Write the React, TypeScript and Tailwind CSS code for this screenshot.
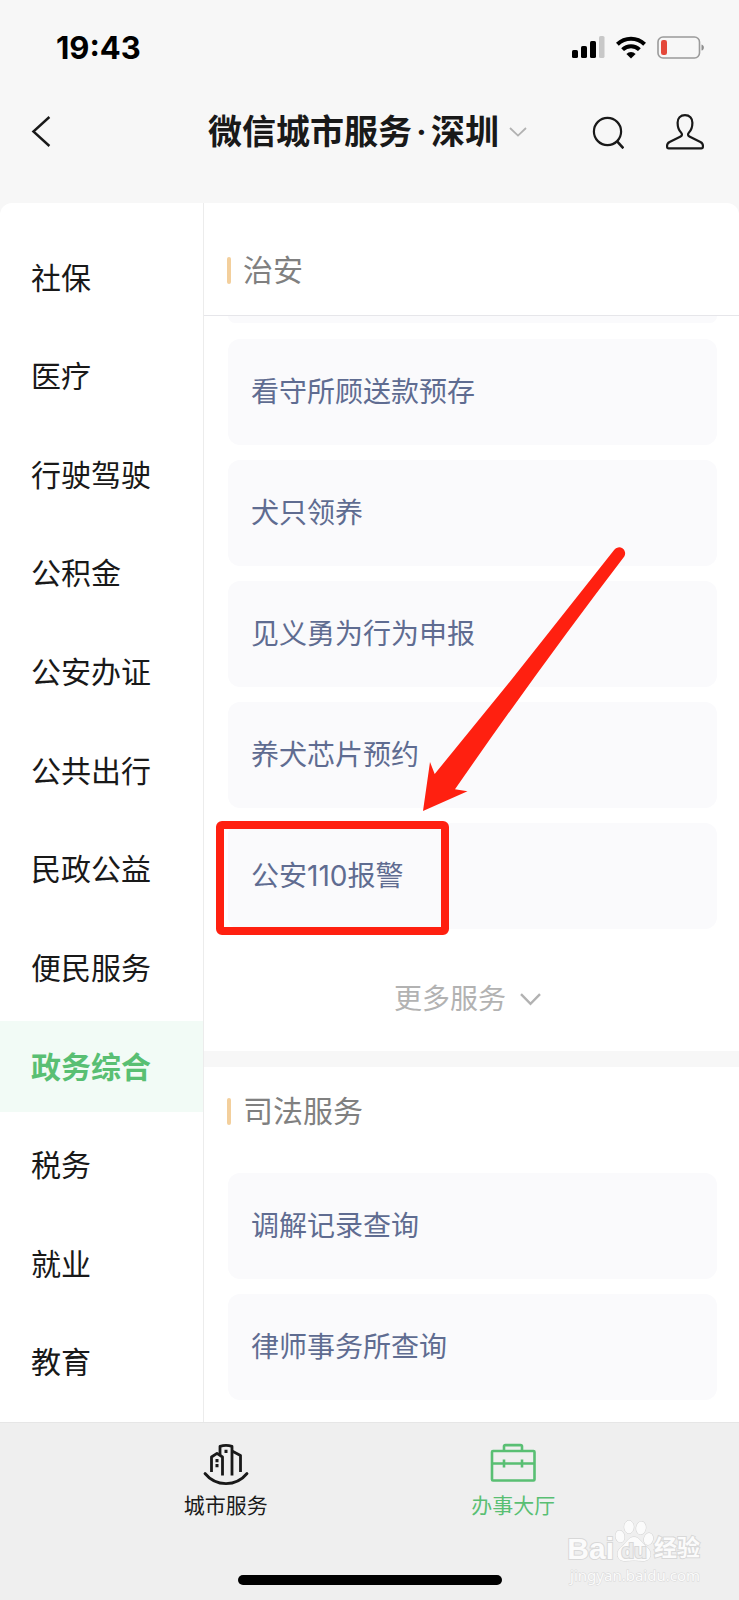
import { useState } from "react";

const CATEGORIES = [
  "社保",
  "医疗",
  "行驶驾驶",
  "公积金",
  "公安办证",
  "公共出行",
  "民政公益",
  "便民服务",
  "政务综合",
  "税务",
  "就业",
  "教育",
] as const;

const SECURITY_SERVICES = ["看守所顾送款预存", "犬只领养", "见义勇为行为申报", "养犬芯片预约", "公安110报警"];
const JUSTICE_SERVICES = ["调解记录查询", "律师事务所查询"];
const HIGHLIGHTED = "公安110报警";

function StatusBar() {
  return (
    <div className="flex h-[94px] items-center justify-between pl-14 pr-[34px] text-black">
      <span className="text-[31px] font-bold leading-none">19:43</span>
      <div className="flex items-center gap-[11px]">
        <svg width="33" height="22" viewBox="0 0 33 22" fill="currentColor">
          <rect x="0" y="14" width="6" height="8" rx="1.6" />
          <rect x="9" y="10" width="6" height="12" rx="1.6" />
          <rect x="18" y="5" width="6" height="17" rx="1.6" />
          <rect x="27" y="0" width="5.5" height="22" rx="1.6" fill="#c8c8c8" />
        </svg>
        <svg width="30" height="23" viewBox="0 0 30 23" fill="none" stroke="currentColor" strokeWidth="4">
          <path d="M1.4 8.2a19.5 19.5 0 0 1 27.2 0" />
          <path d="M6.6 13.6a12 12 0 0 1 16.8 0" />
          <path d="M15 22.6l-4.6-4.7a6.6 6.6 0 0 1 9.2 0z" fill="currentColor" stroke="none" />
        </svg>
        <svg width="48" height="23" viewBox="0 0 48 23" fill="none">
          <rect x="1" y="1" width="41.5" height="21" rx="5" stroke="#9b9b9b" strokeWidth="1.6" />
          <rect x="4" y="4" width="6" height="15" rx="2.2" fill="#e4483a" />
          <path d="M44.5 8.4c3.2.8 3.2 5.4 0 6.2z" fill="#8e8e8e" />
        </svg>
      </div>
    </div>
  );
}

function TitleBar() {
  return (
    <div className="mb-[33px] grid h-[76px] grid-cols-[1fr_auto_1fr] items-center pl-[31px] pr-[35px] text-[#191919]">
      <button type="button" aria-label="返回" className="justify-self-start">
        <svg width="20" height="32" viewBox="0 0 20 32" fill="none" stroke="currentColor" strokeWidth="2.4">
          <path d="M18.4 1L2.4 15.5l16 14.5" />
        </svg>
      </button>
      <button type="button" className="flex items-center gap-[10px]">
        <h1 className="text-[34px] font-semibold leading-none">
          微信城市服务<span className="mx-1">·</span>深圳
        </h1>
        <svg width="18" height="10" viewBox="0 0 18 10" fill="none" stroke="#b2b2b2" strokeWidth="1.8">
          <path d="M1 1l8 7.6L17 1" />
        </svg>
      </button>
      <div className="flex items-center gap-[42px] justify-self-end">
        <button type="button" aria-label="搜索">
          <svg width="32" height="34" viewBox="0 0 32 34" fill="none" stroke="currentColor" strokeWidth="2.2">
            <circle cx="15.5" cy="16.500" r="13.600" />
            <path d="M24.900 26.100l6.500 7.200" strokeWidth="2.6" />
          </svg>
        </button>
        <button type="button" aria-label="我的">
          <svg width="38" height="36" viewBox="0 0 38 36" fill="none" stroke="currentColor" strokeWidth="2.2" strokeLinejoin="round">
            <path d="M19 1.2c-4.6 0-7.4 3.2-7.4 7.6 0 4.4 1.4 7.8 3.6 10 1.2 1.2 1 2.8-.6 3.6L3.6 28C1.8 28.9 1.1 29.8 1.1 31.6v1.2c0 1 .5 1.6 1.6 1.6h32.6c1.1 0 1.6-.6 1.6-1.6v-1.2c0-1.8-.7-2.7-2.5-3.6l-11-5.6c-1.6-.8-1.8-2.4-.6-3.6 2.2-2.2 3.6-5.6 3.6-10 0-4.4-2.8-7.6-7.4-7.6z" />
          </svg>
        </button>
      </div>
    </div>
  );
}

function SectionTitle({ children }: { children: string }) {
  return (
    <h2 className="flex items-center gap-3 text-[30px] leading-[44px] text-[#808080]">
      <span className="h-[27px] w-1 rounded-sm bg-[#f3cf9c]" />
      {children}
    </h2>
  );
}

function ServiceCard({ name }: { name: string }) {
  return (
    <li className="relative">
      <button
        type="button"
        className="flex h-[106px] w-full items-center rounded-xl bg-[#fafafc] px-[23px] text-left text-[28px] leading-[40px] text-[#5f6c91]"
      >
        {name}
      </button>
      {name === HIGHLIGHTED && (
        <>
          <span className="pointer-events-none absolute -left-3 -top-0.5 h-[114px] w-[233px] rounded-md border-8 border-[#ff2010]" />
          <svg
            className="pointer-events-none absolute bottom-[118px] left-[194px]"
            width="206"
            height="264"
            viewBox="0 0 206 264"
            fill="#ff2010"
          >
            <path d="M1 264L8 215l4.700 12L90 132 192.300 2.800a6 6 0 0 1 10 6.600Q117 121 33 242.300l12.500 2z" />
          </svg>
        </>
      )}
    </li>
  );
}

function ServiceList({ items }: { items: string[] }) {
  return (
    <ul className="flex flex-col gap-[15px]">
      {items.map((name) => (
        <ServiceCard key={name} name={name} />
      ))}
    </ul>
  );
}

function CityIcon() {
  return (
    <svg width="46" height="44" viewBox="0 0 46 44" fill="none" stroke="currentColor" strokeWidth="2.8">
      <path d="M8.5 29V14l5.5-3.6 5.5 3.6V32.5" strokeLinejoin="round" />
      <path d="M17 12V3.4Q23 1.4 29 3.4V32.5" strokeLinejoin="round" />
      <path d="M29 8l8.5 4.5V29" strokeLinejoin="round" />
      <path d="M2 30.5a27 27 0 0 0 42 0" strokeLinecap="round" />
      <path d="M14 16v3.2M14 21v3.2M23 6.8v3.2" strokeWidth="3" />
    </svg>
  );
}

function BriefcaseIcon() {
  return (
    <svg width="46" height="44" viewBox="0 0 46 44" fill="none" stroke="currentColor" strokeWidth="2.6" strokeLinejoin="round">
      <rect x="2" y="8" width="42.5" height="29.5" rx="1" />
      <path d="M14 8V3.5q0-1.4 1.4-1.4h15.2q1.4 0 1.4 1.4V8" />
      <path d="M2 20.5h42.5M14 16.5v8M32 16.5v8" />
    </svg>
  );
}

function Watermark() {
  return (
    <div className="pointer-events-none absolute bottom-[14px] right-[39px] flex flex-col items-end font-['Liberation_Sans','Noto_Sans_CJK_SC',sans-serif] text-[#fbfbfb] [-webkit-text-stroke:2px_#d8d8d8] [paint-order:stroke_fill]">
      <div className="flex items-end">
        <span className="text-[30px] font-bold leading-[30px]">Bai</span>
        <span className="relative flex h-[46px] w-10 items-end justify-center">
          <svg className="absolute inset-0" width="40" height="46" viewBox="0 0 40 46" fill="#fbfbfb" stroke="#d2d2d2" strokeWidth="1">
            <ellipse cx="6" cy="18.5" rx="4.5" ry="6" transform="rotate(-10 6 18.5)" />
            <ellipse cx="15" cy="9" rx="4.8" ry="6.5" />
            <ellipse cx="27" cy="10" rx="4.8" ry="6.5" transform="rotate(8 27 10)" />
            <ellipse cx="34.5" cy="21" rx="4.5" ry="6" transform="rotate(15 34.5 21)" />
            <path d="M20 19c-4.5 0-6.5 3.5-9 6.500-2.500 3-7.500 5.500-7.500 10.500 0 4.500 3 7 7.500 7 3 0 6-.6 9-.6s6 .6 9 .6c4.500 0 7.500-2.500 7.500-7 0-5-5-7.500-7.500-10.500-2.500-3-4.500-6.500-9-6.500z" />
          </svg>
          <span className="relative text-[21px] font-bold leading-[26px] text-[#ececec]">du</span>
        </span>
        <span className="text-[23px] font-bold leading-[32px]">经验</span>
      </div>
      <div className="font-['Noto_Sans',sans-serif] text-[15px] leading-[22px] [-webkit-text-stroke:1px_#d8d8d8]">
        jingyan.baidu.com
      </div>
    </div>
  );
}

export default function App() {
  const [active, setActive] = useState<string>("政务综合");

  return (
    <div className="relative flex min-h-screen flex-col bg-[#f7f7f7] font-[Inter,'Noto_Sans_CJK_SC',sans-serif]">
      <header>
        <StatusBar />
        <TitleBar />
      </header>

      <main className="flex flex-1 overflow-hidden rounded-t-xl bg-white">
        {/* Category sidebar */}
        <nav className="flex w-[204px] shrink-0 flex-col justify-between border-r border-[#ececec] pb-[14px] pt-[29px]">
          {CATEGORIES.map((name) => (
            <button
              key={name}
              type="button"
              onClick={() => setActive(name)}
              className={
                name === active
                  ? "h-[91px] bg-[#f2fbf6] pl-[31px] text-left text-[30px] font-bold leading-[44px] text-[#59bf73]"
                  : "h-[91px] pl-[31px] text-left text-[30px] leading-[44px] text-[#191919]"
              }
            >
              {name}
            </button>
          ))}
        </nav>

        {/* Services */}
        <div className="min-w-0 flex-1">
          <section>
            <div className="flex h-[113px] items-center border-b border-[#e6e6ea] px-[23px] pt-[22px]">
              <SectionTitle>治安</SectionTitle>
            </div>
            <div className="pl-6 pr-[22px]">
              <div className="mb-4 h-[7px] rounded-b-xl bg-[#fafafc]" />
              <ServiceList items={SECURITY_SERVICES} />
              <button
                type="button"
                className="flex h-[122px] w-full items-center justify-center gap-[14px] pr-[10px] pt-[18px] text-[28px] leading-[40px] text-[#b2b2b2]"
              >
                更多服务
                <svg width="21" height="13" viewBox="0 0 21 13" fill="none" stroke="currentColor" strokeWidth="2.4">
                  <path d="M1 1.2l9.5 9.6L20 1.2" />
                </svg>
              </button>
            </div>
          </section>

          <section className="border-t-[16px] border-[#f7f7f7] pb-[22px]">
            <div className="mb-[18px] flex h-[88px] items-center px-[23px]">
              <SectionTitle>司法服务</SectionTitle>
            </div>
            <div className="pl-6 pr-[22px]">
              <ServiceList items={JUSTICE_SERVICES} />
            </div>
          </section>
        </div>
      </main>

      <footer className="flex h-[178px] flex-col justify-between border-t border-[#e6e6e6] bg-[#efefef] pb-[15px] pt-5">
        <div className="flex px-[82px] text-[21px] leading-[30px]">
          <button type="button" className="flex flex-1 flex-col items-center gap-1 text-[#191919]">
            <CityIcon />
            城市服务
          </button>
          <button type="button" className="flex flex-1 flex-col items-center gap-1 text-[#59bf73]">
            <BriefcaseIcon />
            办事大厅
          </button>
        </div>
        <div className="h-[10px] w-[264px] self-center rounded-full bg-black" />
      </footer>

      <Watermark />
    </div>
  );
}
